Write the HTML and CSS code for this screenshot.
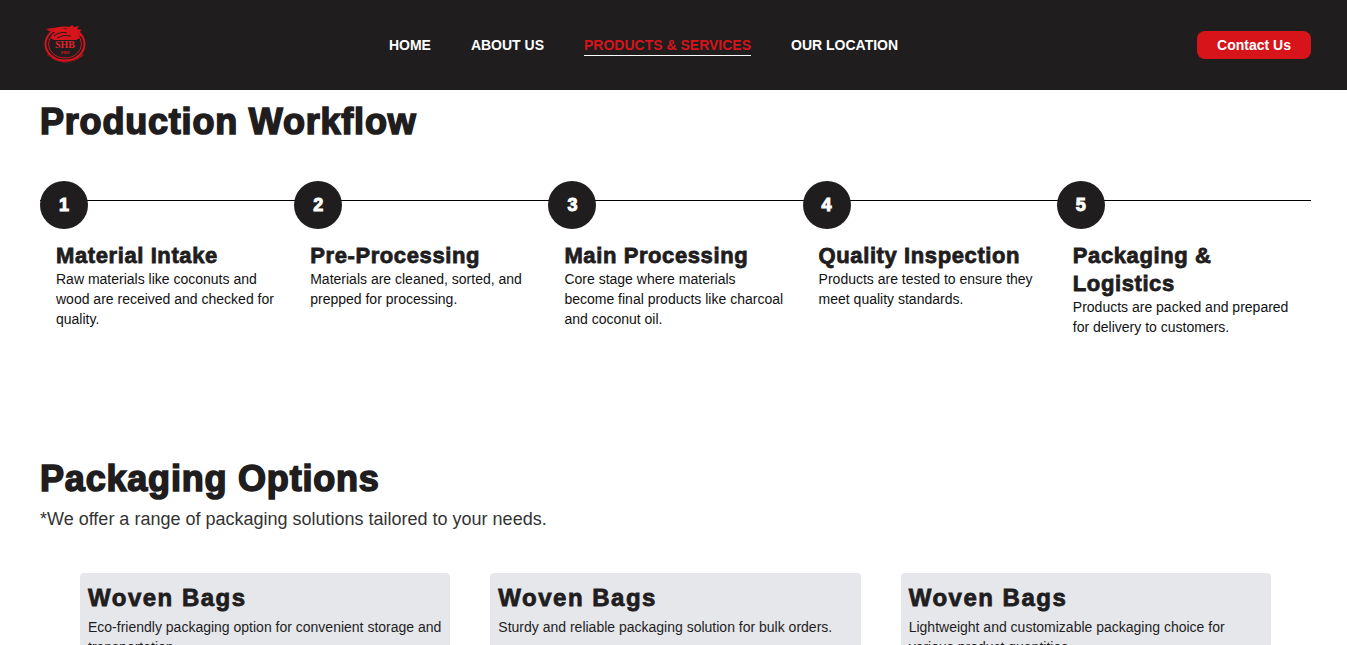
FILE: index.html
```html
<!DOCTYPE html>
<html lang="en">
<head>
    <meta charset="UTF-8">
    <meta name="viewport" content="width=device-width, initial-scale=1.0">
    <title>Products &amp; Services</title>
    <link rel="stylesheet" href="styles.css">
</head>
<body>
    <header class="site-header">
        <a class="logo" href="#">
            <svg width="50" height="50" viewBox="0 0 50 50">
                <defs>
                    <path id="logo-arc" d="M4 33 Q25 52 46 33"/>
                </defs>
                <ellipse cx="25" cy="24" rx="19.5" ry="16.5" fill="none" stroke="#d7141a" stroke-width="2"/>
                <ellipse cx="25" cy="24" rx="16.5" ry="14" fill="none" stroke="#d7141a" stroke-width="1"/>
                <path d="M10 18 Q14 11 22 9 L30 10 Q37 12 40 18 L36 20 L14 20 Z" fill="#d7141a"/>
                <path d="M6 9 L20 7 L26 10 L32 5 L34 7 L39 6 L37 9 L42 10 L38 13 L42 17 L35 15 L30 12 L22 12 L14 12 L9 11 Z" fill="#d7141a"/>
                <path d="M14 16 Q20 11 27 13 M17 18 Q23 14 31 16" fill="none" stroke="#1f1d1e" stroke-width="1"/>
                <text x="25" y="28" class="logo-mark">SHB</text>
                <text x="25" y="33.5" class="logo-small">STAR</text>
                <text class="logo-small"><textPath href="#logo-arc" startOffset="50%">PT SINARINDO HAN BARA</textPath></text>
            </svg>
        </a>
        <nav class="main-nav">
            <a href="#">HOME</a>
            <a href="#">ABOUT US</a>
            <a href="#" class="active">PRODUCTS &amp; SERVICES</a>
            <a href="#">OUR LOCATION</a>
        </nav>
        <a class="contact-btn" href="#">Contact Us</a>
    </header>

    <main>
        <section class="workflow">
            <h1>Production Workflow</h1>
            <div class="steps">
                <div class="step">
                    <div class="step-top"><span class="step-num">1</span></div>
                    <div class="step-body">
                        <h3>Material Intake</h3>
                        <p>Raw materials like coconuts and wood are received and checked for quality.</p>
                    </div>
                </div>
                <div class="step">
                    <div class="step-top"><span class="step-num">2</span></div>
                    <div class="step-body">
                        <h3>Pre-Processing</h3>
                        <p>Materials are cleaned, sorted, and prepped for processing.</p>
                    </div>
                </div>
                <div class="step">
                    <div class="step-top"><span class="step-num">3</span></div>
                    <div class="step-body">
                        <h3>Main Processing</h3>
                        <p>Core stage where materials become final products like charcoal and coconut oil.</p>
                    </div>
                </div>
                <div class="step">
                    <div class="step-top"><span class="step-num">4</span></div>
                    <div class="step-body">
                        <h3>Quality Inspection</h3>
                        <p>Products are tested to ensure they meet quality standards.</p>
                    </div>
                </div>
                <div class="step">
                    <div class="step-top"><span class="step-num">5</span></div>
                    <div class="step-body">
                        <h3>Packaging &amp; Logistics</h3>
                        <p>Products are packed and prepared for delivery to customers.</p>
                    </div>
                </div>
            </div>
        </section>

        <section class="packaging">
            <h1>Packaging Options</h1>
            <p class="lead">*We offer a range of packaging solutions tailored to your needs.</p>
            <div class="cards">
                <div class="card">
                    <h3>Woven Bags</h3>
                    <p>Eco-friendly packaging option for convenient storage and transportation.</p>
                </div>
                <div class="card">
                    <h3>Woven Bags</h3>
                    <p>Sturdy and reliable packaging solution for bulk orders.</p>
                </div>
                <div class="card">
                    <h3>Woven Bags</h3>
                    <p>Lightweight and customizable packaging choice for various product quantities.</p>
                </div>
            </div>
        </section>
    </main>
</body>
</html>
```

FILE: styles.css
```css
* {
    box-sizing: border-box;
}

html, body {
    height: 645px;
    overflow: hidden;
}

body {
    margin: 0;
    font-family: "Liberation Sans", Arial, sans-serif;
    background-color: #fff;
    color: #1f1d1e;
}

.site-header {
    height: 90px;
    padding: 0 36px 0 40px;
    background-color: #1f1d1e;
    display: flex;
    align-items: center;
    justify-content: space-between;
}

.logo {
    display: block;
    width: 50px;
    height: 50px;
}

.logo-mark {
    font-family: "Liberation Serif", serif;
    font-size: 10px;
    font-weight: bold;
    fill: #e8202a;
    text-anchor: middle;
}

.logo-small {
    font-size: 3.2px;
    font-weight: bold;
    fill: #d7141a;
    text-anchor: middle;
}

.main-nav {
    display: flex;
    gap: 40px;
}

.main-nav a {
    color: #fff;
    font-size: 14px;
    font-weight: bold;
    line-height: 20px;
    text-decoration: none;
    border-bottom: 1px solid transparent;
}

.main-nav a.active {
    color: #d7141a;
    border-bottom-color: #fff;
}

.contact-btn {
    width: 114px;
    height: 28px;
    border-radius: 8px;
    background-color: #d7141a;
    color: #fff;
    font-size: 14px;
    font-weight: bold;
    line-height: 28px;
    text-align: center;
    text-decoration: none;
}

h1 {
    margin: 0;
    font-size: 36px;
    line-height: 40px;
    font-weight: bold;
    letter-spacing: 0.8px;
    -webkit-text-stroke: 1.6px currentColor;
}

h3 {
    margin: 0;
    font-weight: bold;
    -webkit-text-stroke: 0.8px currentColor;
}

.workflow {
    padding: 12px 36px 0 40px;
    height: 345px;
}

.steps {
    display: flex;
    margin-top: 39px;
}

.step {
    flex: 1;
    min-width: 0;
}

.step-top {
    height: 48px;
    position: relative;
}

.step-top::before {
    content: "";
    position: absolute;
    left: 0;
    right: 0;
    top: 19px;
    height: 1px;
    background-color: #000;
}

.step-num {
    position: relative;
    display: block;
    width: 48px;
    height: 48px;
    border-radius: 50%;
    background-color: #1f1d1e;
    color: #fff;
    font-size: 18px;
    font-weight: bold;
    line-height: 49px;
    text-align: center;
    -webkit-text-stroke: 1px currentColor;
}

.step-body {
    padding: 13px 16px 0;
}

.step-body h3 {
    font-size: 22px;
    line-height: 28px;
    letter-spacing: 0.6px;
    margin-bottom: -1px;
}

.step-body p {
    margin: 0;
    font-size: 14px;
    line-height: 20px;
    color: #111;
}

.packaging {
    padding: 0 36px 0 40px;
    margin-top: 24px;
}

.lead {
    margin: 8px 0 0;
    font-size: 18px;
    line-height: 24px;
    color: #333;
}

.cards {
    display: grid;
    grid-template-columns: repeat(3, 1fr);
    gap: 40px;
    margin: 42px 40px 0;
}

.card {
    padding: 8px;
    height: 120px;
    border-radius: 4px;
    background-color: #e5e7eb;
}

.card h3 {
    font-size: 24px;
    line-height: 34px;
    letter-spacing: 1.5px;
}

.card p {
    margin: 2px 0 0;
    font-size: 14px;
    line-height: 20px;
}
```
